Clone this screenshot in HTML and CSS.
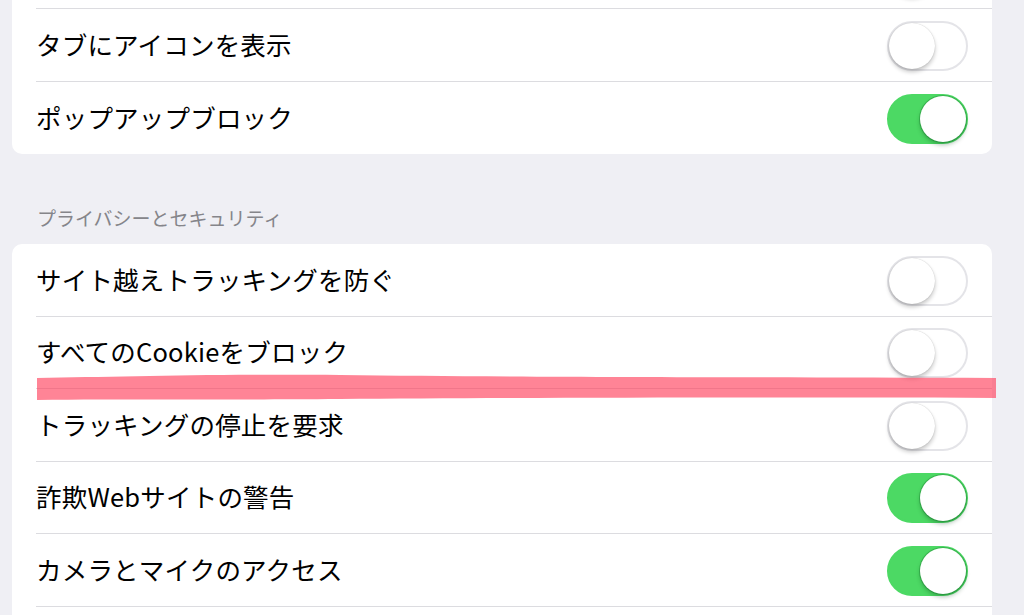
FILE: index.html
```html
<!DOCTYPE html>
<html lang="ja">
<head>
<meta charset="utf-8">
<link rel="stylesheet" href="styles.css">
</head>
<body>
<div class="page">
  <div class="card card-top">
    <div class="row"><span class="label"></span><span class="toggle"><span class="knob"></span></span></div>
    <div class="row"><span class="label">タブにアイコンを表示</span><span class="toggle"><span class="knob"></span></span></div>
    <div class="row"><span class="label">ポップアップブロック</span><span class="toggle on"><span class="knob"></span></span></div>
  </div>

  <div class="section-header">プライバシーとセキュリティ</div>

  <div class="card">
    <div class="row"><span class="label">サイト越えトラッキングを防ぐ</span><span class="toggle"><span class="knob"></span></span></div>
    <div class="row"><span class="label">すべてのCookieをブロック</span><span class="toggle"><span class="knob"></span></span></div>
    <div class="row"><span class="label">トラッキングの停止を要求</span><span class="toggle"><span class="knob"></span></span></div>
    <div class="row"><span class="label">詐欺Webサイトの警告</span><span class="toggle on"><span class="knob"></span></span></div>
    <div class="row"><span class="label">カメラとマイクのアクセス</span><span class="toggle on"><span class="knob"></span></span></div>
    <div class="row"></div>
  </div>
</div>

<svg class="marker" width="1024" height="40" viewBox="0 0 1024 40">
  <path d="M37 13 C 120 12, 200 9, 340 10 C 500 12, 700 12, 996 13 L 996 33 C 700 32, 500 33, 340 34 C 200 35, 120 34, 37 35 Z" fill="rgb(255,50,80)" fill-opacity="0.6"/>
</svg>
</body>
</html>
```

FILE: styles.css
```css
html, body {
  margin: 0;
  padding: 0;
  background: #efeff4;
  overflow: hidden;
}
body {
  width: 1024px;
  height: 615px;
  position: relative;
  font-family: "Noto Sans CJK JP", "Noto Sans", sans-serif;
}
.page {
  padding: 0 32px 0 12px;
}
.card {
  background: #ffffff;
  border-radius: 10px;
  overflow: hidden;
}
.card-top {
  margin-top: -63.5px;
}
.row {
  height: 72.5px;
  box-sizing: border-box;
  margin-left: 24px;
  padding-right: 24px;
  display: flex;
  align-items: center;
  justify-content: space-between;
  border-bottom: 1px solid #dcdce0;
}
.row:last-child {
  border-bottom: none;
}
.label {
  font-size: 25.5px;
  color: #000;
  letter-spacing: 0.2px;
  line-height: 1;
  padding-bottom: 3px;
}
.section-header {
  margin-top: 53px;
  margin-bottom: 15px;
  padding-left: 25px;
  font-size: 19px;
  line-height: 22px;
  color: #85858a;
}
.toggle {
  position: relative;
  width: 81px;
  height: 50px;
  border-radius: 25px;
  box-sizing: border-box;
  border: 2px solid #e4e4e8;
  background: #fff;
  flex: none;
  margin-top: 2px;
  margin-left: auto;
}
.toggle .knob {
  position: absolute;
  top: 0;
  left: 0;
  width: 46px;
  height: 46px;
  border-radius: 50%;
  background: #fff;
  box-shadow: 0 3px 4px rgba(0,0,0,0.22), 0 0 1px rgba(0,0,0,0.25);
}
.toggle.on {
  background: #4cd964;
  border-color: #4cd964;
}
.toggle.on .knob {
  left: auto;
  right: 0;
  box-shadow: 0 3px 4px rgba(0,60,20,0.3), 0 0 0 1px rgba(40,150,60,0.5);
}
.marker {
  position: absolute;
  left: 0;
  top: 365px;
}
```
